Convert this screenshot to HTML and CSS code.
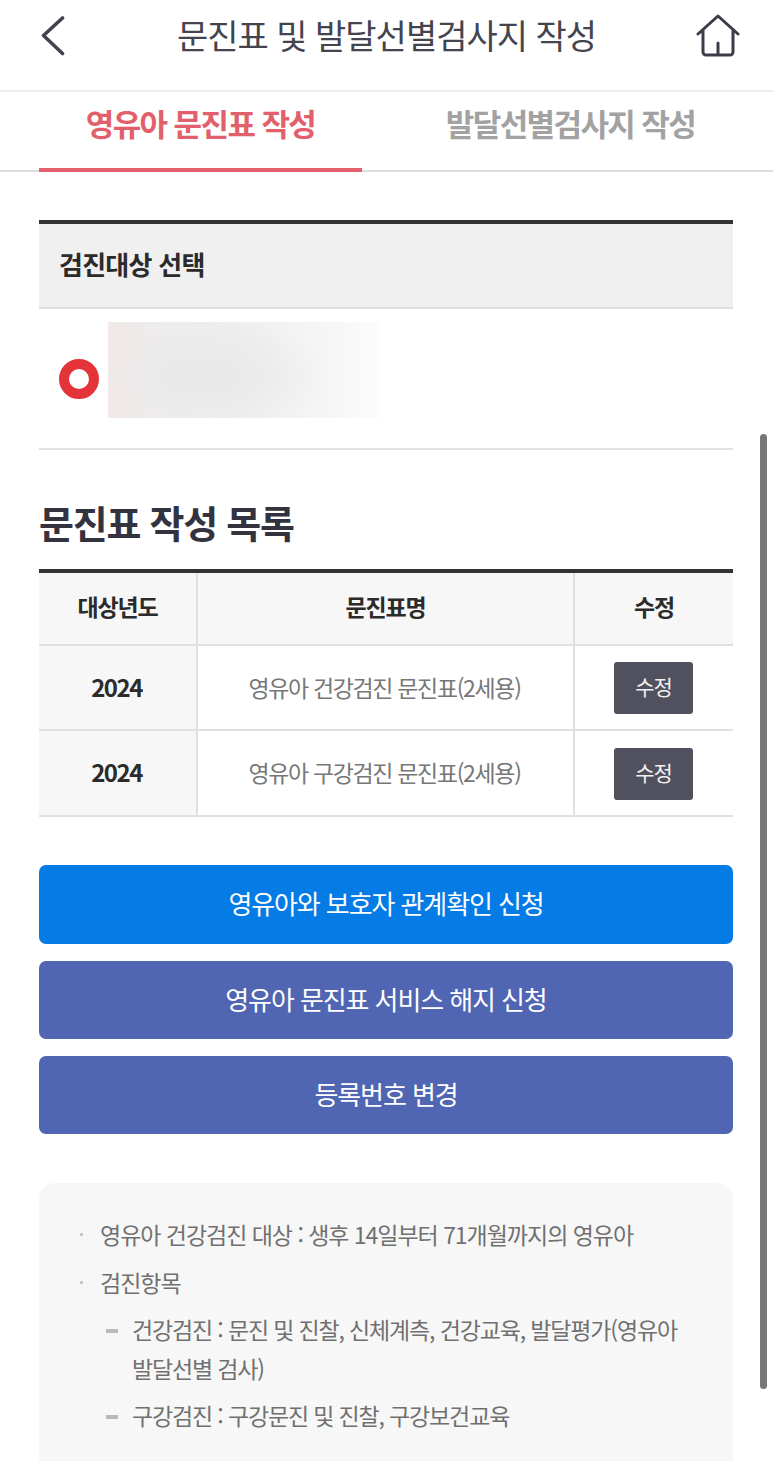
FILE: index.html
```html
<!DOCTYPE html>
<html lang="ko">
<head>
<meta charset="utf-8">
<title>문진표 및 발달선별검사지 작성</title>
<link rel="stylesheet" href="styles.css">
</head>
<body>
<div class="page">
  <header class="topbar">
    <svg class="icon-back" viewBox="0 0 26 42" width="26" height="42"><path d="M23.5 3 L4.5 20.5 L23.5 38.5" fill="none" stroke="#43434f" stroke-width="3.6" stroke-linecap="round" stroke-linejoin="round"/></svg>
    <h1 class="topbar-title">문진표 및 발달선별검사지 작성</h1>
    <svg class="icon-home" viewBox="0 0 44 44" width="44" height="44"><path d="M2 20 L22 2 L42 20 M7 16 V38 a3 3 0 0 0 3 3 H34 a3 3 0 0 0 3 -3 V16 M22 41 V29" fill="none" stroke="#3c3c48" stroke-width="3" stroke-linecap="round" stroke-linejoin="round"/></svg>
  </header>
  <nav class="tabs">
    <div class="tab tab-active">영유아 문진표 작성</div>
    <div class="tab">발달선별검사지 작성</div>
  </nav>
  <main class="content">
    <section class="target">
      <div class="target-head">검진대상 선택</div>
      <div class="target-row">
        <span class="radio"></span>
        <div class="blurred"></div>
      </div>
    </section>
    <h2 class="section-title">문진표 작성 목록</h2>
    <table class="list">
      <thead>
        <tr><th class="c1">대상년도</th><th class="c2">문진표명</th><th class="c3">수정</th></tr>
      </thead>
      <tbody>
        <tr><th class="year">2024</th><td><span class="name">영유아 건강검진 문진표(2세용)</span></td><td><span class="edit">수정</span></td></tr>
        <tr><th class="year">2024</th><td><span class="name">영유아 구강검진 문진표(2세용)</span></td><td><span class="edit">수정</span></td></tr>
      </tbody>
    </table>
    <div class="actions">
      <div class="btn btn-blue">영유아와 보호자 관계확인 신청</div>
      <div class="btn btn-indigo">영유아 문진표 서비스 해지 신청</div>
      <div class="btn btn-indigo">등록번호 변경</div>
    </div>
    <section class="info">
      <ul class="dots">
        <li>영유아 건강검진 대상 : 생후 14일부터 71개월까지의 영유아</li>
        <li>검진항목
          <ul class="dashes">
            <li>건강검진 : 문진 및 진찰, 신체계측, 건강교육, 발달평가(영유아 발달선별 검사)</li>
            <li>구강검진 : 구강문진 및 진찰, 구강보건교육</li>
          </ul>
        </li>
      </ul>
    </section>
  </main>
  <div class="scrollbar"></div>
</div>
</body>
</html>
```
FILE: styles.css
```css
* { box-sizing: border-box; }
html, body { margin: 0; padding: 0; background: #fff; }
body { font-family: "Noto Sans CJK KR", "Noto Sans", sans-serif; color: #333; }
.page { position: relative; width: 773px; height: 1461px; overflow: hidden; }
ul { list-style: none; margin: 0; padding: 0; }

.topbar { height: 92px; border-bottom: 2px solid #eee; display: flex; align-items: center; justify-content: space-between; padding: 0 33px 18px 39px; position: relative; }
.topbar-title { position: absolute; left: 0; right: 0; top: 10px; margin: 0; text-align: center; font-size: 34px; line-height: 50px; font-weight: 400; letter-spacing: -1px; color: #44444f; }
.icon-back, .icon-home { flex: none; }

.tabs { height: 80px; display: flex; padding: 0 39px 0; border-bottom: 2px solid #ddd; }
.tab { width: 323px; height: 80px; text-align: center; font-size: 31px; line-height: 62px; font-weight: 700; letter-spacing: -1.6px; color: #a2a2a2; white-space: nowrap; }
.tab:last-child { width: 371px; padding-left: 46px; }
.tab-active { color: #e2606b; border-bottom: 4px solid #e2606b; }

.content { padding: 48px 40px 0 39px; }
.target { border-top: 4px solid #333; border-bottom: 2px solid #e2e2e2; }
.target-head { height: 85px; background: #f0f0f0; border-bottom: 2px solid #ddd; padding-left: 20px; font-size: 26px; line-height: 80px; font-weight: 700; letter-spacing: -.75px; color: #2b2b2b; }
.target-row { height: 139px; display: flex; align-items: flex-start; padding: 13px 0 0 20px; gap: 9px; }
.radio { width: 40px; height: 40px; margin-top: 37px; border-radius: 50%; border: 10.5px solid #e5333a; background: #fff; flex: none; }
.blurred { width: 273px; height: 96px; background: radial-gradient(ellipse 45% 60% at 38% 55%, #e8e8e8, rgba(232,232,232,0)), linear-gradient(90deg, #f2e8e8 0%, #eeebeb 14%, #efefef 50%, #f6f6f6 80%, #fcfcfc 100%); }

.section-title { margin: 45px 0 20px; font-size: 38px; line-height: 54px; font-weight: 700; letter-spacing: -1.25px; color: #33333f; }

.list { width: 100%; border-collapse: collapse; table-layout: fixed; border-top: 4px solid #333; }
.list th, .list td { border-left: 2px solid #e0e0e0; border-bottom: 2px solid #e0e0e0; text-align: center; padding: 0; }
.list th:first-child { border-left: 0; }
.list .c1 { width: 158px; }
.list .c3 { width: 159px; }
.list thead th { height: 74px; padding-bottom: 5px; background: #f7f7f7; font-size: 23px; font-weight: 700; letter-spacing: -1.2px; color: #2b2b2b; }
.list tbody tr { height: 85px; }
.list tbody tr:last-child { height: 86px; }
.list .year { padding: 0 2px 3px 0; background: #f7f7f7; font-size: 24px; font-weight: 700; letter-spacing: -1.5px; color: #2b2b2b; }
.list td { font-size: 23px; letter-spacing: -1.35px; color: #777; }
.name { position: relative; top: -1px; left: -1px; }
.edit { display: inline-block; width: 79px; height: 52px; margin: 1px 1px 0 0; border-radius: 3px; background: #50505e; color: #f0f0f0; font-size: 21px; line-height: 48px; letter-spacing: -1px; vertical-align: middle; }

.actions { margin-top: 48px; display: flex; flex-direction: column; gap: 17px; }
.btn { height: 78px; border-radius: 7px; color: #fff; text-align: center; font-size: 26px; line-height: 76px; letter-spacing: -1.1px; }
.btn-blue { height: 79px; background: #057be6; }
.btn-indigo { background: #5166b2; }

.info { margin-top: 49px; height: 300px; background: #f7f7f7; border-radius: 16px; padding: 27px 50px 0 41px; font-size: 23px; line-height: 48px; letter-spacing: -1.03px; color: #707070; word-break: keep-all; }
.dots > li { position: relative; padding-left: 20px; }
.dots > li::before { content: ""; position: absolute; left: 0; top: 23px; width: 3px; height: 3px; border-radius: 50%; background: #bbb; }
.dashes > li { position: relative; padding: 4px 0 4px 32px; line-height: 39px; letter-spacing: -1.15px; }
.dashes > li::before { content: ""; position: absolute; left: 6px; top: 23px; width: 12px; height: 4px; background: #bbb; }
.scrollbar { position: absolute; left: 760px; top: 434px; width: 7px; height: 955px; border-radius: 4px; background: #777; }
```
